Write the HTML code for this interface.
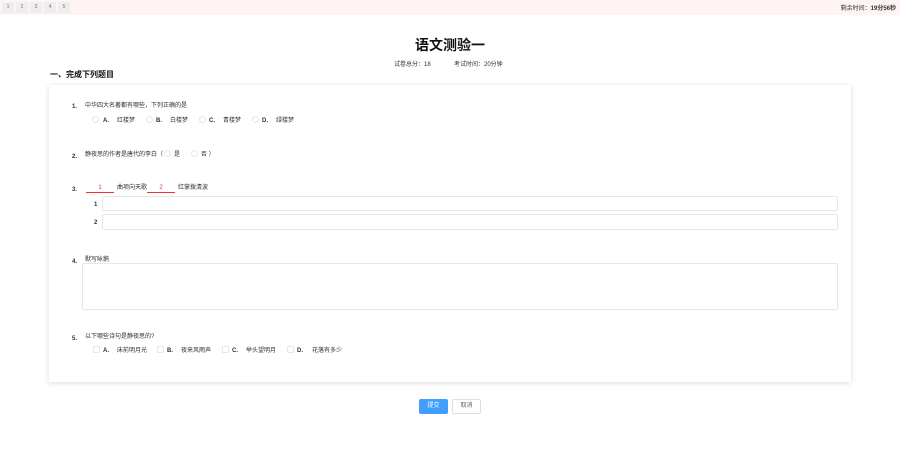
<!DOCTYPE html>
<html><head><meta charset="utf-8"><style>
*{margin:0;padding:0;box-sizing:border-box}
body{width:900px;height:465px;background:#fff;font-family:"Liberation Sans","Noto Sans CJK SC",sans-serif;color:#303133;position:relative;overflow:hidden}
.a{position:absolute;white-space:nowrap}
.s{font-size:6px;line-height:8px;margin-top:2px}
.b{font-weight:bold}
.r{position:absolute;width:7px;height:7px;border:1px solid #e4e7ed;border-radius:50%;margin-top:1px}
.nb{position:absolute;top:2px;width:12px;height:11px;background:#eeeeee;font-size:5px;line-height:11px;text-align:center;color:#777}
.inp{position:absolute;border:1px solid #e4e7ed;border-radius:2px;background:#fff}
</style></head><body>
<div class="a" style="left:0;top:0;width:900px;height:15px;background:#fdf4f3"></div>
<div class="nb" style="left:2px">1</div><div class="nb" style="left:16px">2</div><div class="nb" style="left:30px">3</div><div class="nb" style="left:44px">4</div><div class="nb" style="left:58px">5</div>
<div class="a s" style="right:4px;top:3px">剩余时间：<b>19分56秒</b></div>
<div class="a b" style="left:0;width:900px;text-align:center;top:36px;font-size:14px;line-height:18px;color:#111">语文测验一</div>
<div class="a s" style="left:394px;top:59px">试卷总分：18</div>
<div class="a s" style="left:454px;top:59px">考试时间：20分钟</div>
<div class="a b" style="left:50px;top:69px;font-size:8px;line-height:11px;color:#111">一、完成下列题目</div>
<div class="a" style="left:49px;top:85px;width:802px;height:297px;background:#fff;box-shadow:0 1px 5px rgba(0,0,0,0.15)"></div>

<div class="a s b" style="left:72px;top:101px">1.</div>
<div class="a s" style="left:85px;top:100px">中华四大名著都有哪些，下列正确的是</div>
<div class="r" style="left:92px;top:115px"></div><div class="a s b" style="left:103px;top:115px">A.</div><div class="a s" style="left:117px;top:115px">红楼梦</div>
<div class="r" style="left:146px;top:115px"></div><div class="a s b" style="left:156px;top:115px">B.</div><div class="a s" style="left:170px;top:115px">白楼梦</div>
<div class="r" style="left:199px;top:115px"></div><div class="a s b" style="left:209px;top:115px">C.</div><div class="a s" style="left:223px;top:115px">青楼梦</div>
<div class="r" style="left:252px;top:115px"></div><div class="a s b" style="left:262px;top:115px">D.</div><div class="a s" style="left:276px;top:115px">绿楼梦</div>

<div class="a s b" style="left:72px;top:151px">2.</div>
<div class="a s" style="left:85px;top:149px">静夜思的作者是唐代的李白（</div>
<div class="r" style="left:164px;top:149px"></div><div class="a s" style="left:174px;top:149px">是</div>
<div class="r" style="left:191px;top:149px"></div><div class="a s" style="left:201px;top:149px">否 ）</div>

<div class="a s b" style="left:72px;top:184px">3.</div>
<div class="a s" style="left:86px;top:182px;width:28px;text-align:center;color:#e33;border-bottom:1px solid #e33;height:9px">1</div>
<div class="a s" style="left:117px;top:182px">曲项向天歌</div>
<div class="a s" style="left:147px;top:182px;width:28px;text-align:center;color:#e33;border-bottom:1px solid #e33;height:9px">2</div>
<div class="a s" style="left:178px;top:182px">红掌拨清波</div>
<div class="a s b" style="left:94px;top:199px">1</div>
<div class="inp" style="left:102px;top:196px;width:736px;height:15px"></div>
<div class="a s b" style="left:94px;top:217px">2</div>
<div class="inp" style="left:102px;top:214px;width:736px;height:16px"></div>

<div class="a s b" style="left:72px;top:256px">4.</div>
<div class="a s" style="left:85px;top:254px">默写咏鹅</div>
<div class="inp" style="left:82px;top:263px;width:756px;height:47px"></div>

<div class="a s b" style="left:72px;top:333px">5.</div>
<div class="a s" style="left:85px;top:331px">以下哪些诗句是静夜思的?</div>
<div class="r" style="left:93px;top:345px;border-radius:1px"></div><div class="a s b" style="left:103px;top:345px">A.</div><div class="a s" style="left:117px;top:345px">床前明月光</div>
<div class="r" style="left:157px;top:345px;border-radius:1px"></div><div class="a s b" style="left:167px;top:345px">B.</div><div class="a s" style="left:181px;top:345px">夜来风雨声</div>
<div class="r" style="left:222px;top:345px;border-radius:1px"></div><div class="a s b" style="left:232px;top:345px">C.</div><div class="a s" style="left:246px;top:345px">举头望明月</div>
<div class="r" style="left:287px;top:345px;border-radius:1px"></div><div class="a s b" style="left:297px;top:345px">D.</div><div class="a s" style="left:312px;top:345px">花落有多少</div>

<div class="a" style="left:419px;top:399px;width:29px;height:15px;line-height:15px;font-size:6px;background:#409eff;color:#fff;text-align:center;border-radius:2px">提交</div>
<div class="a" style="left:452px;top:399px;width:29px;height:15px;line-height:13px;font-size:6px;border:1px solid #dcdfe6;color:#606266;text-align:center;border-radius:2px">取消</div>
</body></html>
